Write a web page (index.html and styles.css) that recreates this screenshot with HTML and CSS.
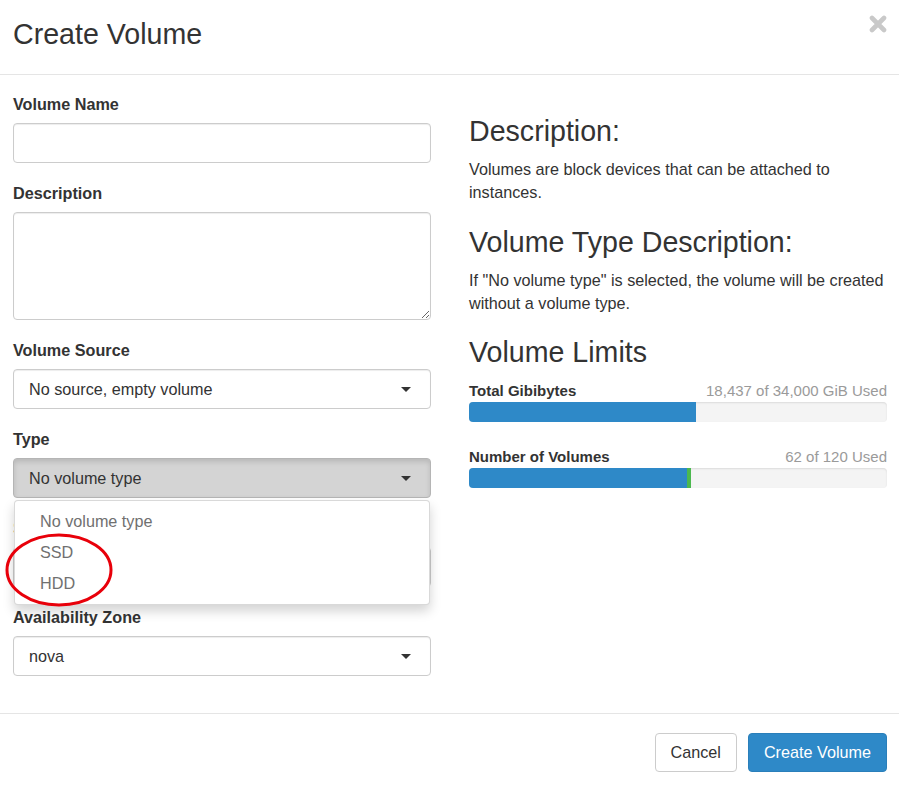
FILE: index.html
```html
<!DOCTYPE html>
<html>
<head>
<meta charset="utf-8">
<link rel="stylesheet" href="styles.css">
</head>
<body>
<div class="modal">
  <div class="modal-header">
    <h3 class="modal-title">Create Volume</h3>
    <span class="close">
      <svg width="18" height="18" viewBox="0 0 18 18"><path d="M3 3 L15 15 M15 3 L3 15" stroke="#c9c9c9" stroke-width="4.6" stroke-linecap="round"/></svg>
    </span>
  </div>
  <div class="modal-body">
    <div class="col-left">
      <div class="form-group">
        <label>Volume Name</label>
        <div class="form-control"></div>
      </div>
      <div class="form-group">
        <label>Description</label>
        <textarea class="form-control textarea"></textarea>
      </div>
      <div class="form-group">
        <label>Volume Source</label>
        <div class="form-control select">No source, empty volume<span class="caret"></span></div>
      </div>
      <div class="form-group">
        <label>Type</label>
        <div class="dropdown">
          <div class="form-control select open">No volume type<span class="caret"></span></div>
          <div class="dropdown-menu">
            <div class="item">No volume type</div>
            <div class="item">SSD</div>
            <div class="item">HDD</div>
            <svg class="annot" width="112" height="78" viewBox="0 0 112 78"><ellipse cx="55" cy="38" rx="52" ry="35" fill="none" stroke="#e8000a" stroke-width="3"/></svg>
          </div>
        </div>
      </div>
      <div class="form-group hidden-under">
        <label>Size (GiB) <span class="req">*</span></label>
        <div class="form-control"></div>
      </div>
      <div class="form-group">
        <label>Availability Zone</label>
        <div class="form-control select">nova<span class="caret"></span></div>
      </div>
    </div>
    <div class="col-right">
      <h3 class="first">Description:</h3>
      <p>Volumes are block devices that can be attached to instances.</p>
      <h3>Volume Type Description:</h3>
      <p>If "No volume type" is selected, the volume will be created without a volume type.</p>
      <h3>Volume Limits</h3>
      <div class="limit">
        <div class="limit-head"><strong>Total Gibibytes</strong><span class="used">18,437 of 34,000 GiB Used</span></div>
        <div class="progress"><div class="bar" style="width:54.2%"></div></div>
      </div>
      <div class="limit second">
        <div class="limit-head"><strong>Number of Volumes</strong><span class="used">62 of 120 Used</span></div>
        <div class="progress"><div class="bar" style="width:52.2%"></div><div class="bar new" style="width:0.83%"></div></div>
      </div>
    </div>
  </div>
  <div class="modal-footer">
    <button class="btn btn-default">Cancel</button>
    <button class="btn btn-primary">Create Volume</button>
  </div>
</div>
</body>
</html>
```

FILE: styles.css
```css
* { box-sizing: border-box; }
html, body { margin: 0; padding: 0; background: #fff; }
body {
  font-family: "Liberation Sans", Arial, sans-serif;
  font-size: 16.2px;
  line-height: 23px;
  color: #333;
}
.modal { position: relative; width: 899px; }
.modal-header {
  position: relative;
  padding: 19px 13px 24px;
  border-bottom: 1px solid #e5e5e5;
}
.modal-title {
  margin: 0;
  font-size: 28.6px;
  font-weight: normal;
  line-height: 31px;
}
.close {
  position: absolute;
  right: 12px;
  top: 15px;
  width: 18px;
  height: 18px;
}
.close svg { display: block; }
.modal-body {
  display: grid;
  grid-template-columns: 418px 418px;
  column-gap: 38px;
  padding: 18px 12px 18px 13px;
}
.form-group { margin-bottom: 19px; }
label {
  display: block;
  font-weight: bold;
  margin-bottom: 7px;
}
.req { color: #333; }
.form-control {
  display: block;
  width: 100%;
  height: 40px;
  border: 1px solid #ccc;
  border-radius: 4px;
  background: #fff;
  box-shadow: inset 0 1px 1px rgba(0,0,0,0.075);
  padding: 0 15px;
  line-height: 38px;
  font-family: inherit;
  font-size: 16.2px;
  color: #333;
}
.textarea { height: 108px; resize: vertical; margin: 0; }
.select { position: relative; }
.caret {
  position: absolute;
  right: 19px;
  top: 17px;
  width: 0;
  height: 0;
  border-left: 5.5px solid transparent;
  border-right: 5.5px solid transparent;
  border-top: 5px solid #333;
}
.select.open {
  background: #d4d4d4;
  border-color: #b5b5b5;
  box-shadow: inset 0 3px 5px rgba(0,0,0,0.125);
}
.dropdown { position: relative; }
.dropdown-menu {
  position: absolute;
  top: 42px;
  left: 1px;
  right: 1px;
  z-index: 10;
  background: #fff;
  border: 1px solid rgba(0,0,0,0.15);
  border-radius: 4px;
  box-shadow: 0 6px 12px rgba(0,0,0,0.175);
  padding: 5px 0;
}
.item {
  height: 31px;
  line-height: 31px;
  padding: 0 25px;
  color: #707070;
}
.annot {
  position: absolute;
  left: -11px;
  top: 31px;
  overflow: visible;
}
.hidden-under label { color: #c8a070; }
.col-right h3 {
  margin: 22.5px 0 11px;
  font-size: 28.6px;
  font-weight: normal;
  line-height: 31px;
}
.col-right h3.first { margin-top: 23px; }
.col-right p { margin: 0; }
.limit-head {
  display: flex;
  justify-content: space-between;
  font-size: 15px;
  line-height: 23px;
}
.limit-head strong { color: #333; }
.used { color: #9a9a9a; }
.limit.second { margin-top: 23px; }
.progress {
  display: flex;
  height: 20px;
  background: #f4f4f4;
  border-radius: 4px;
  overflow: hidden;
  box-shadow: inset 0 1px 2px rgba(0,0,0,0.1);
}
.bar { height: 100%; background: #2e89c8; }
.bar.new { background: #4cb84f; }
.modal-footer {
  display: flex;
  justify-content: flex-end;
  gap: 11px;
  padding: 19px 12px 13px;
  border-top: 1px solid #e5e5e5;
}
.btn {
  height: 39px;
  padding: 0 15px;
  border-radius: 4px;
  font-family: inherit;
  font-size: 16.2px;
  line-height: 37px;
  border: 1px solid transparent;
}
.btn-default { background: #fff; border-color: #ccc; color: #333; }
.btn-primary { background: #2e89c8; border-color: #2a7fba; color: #fff; }
```
